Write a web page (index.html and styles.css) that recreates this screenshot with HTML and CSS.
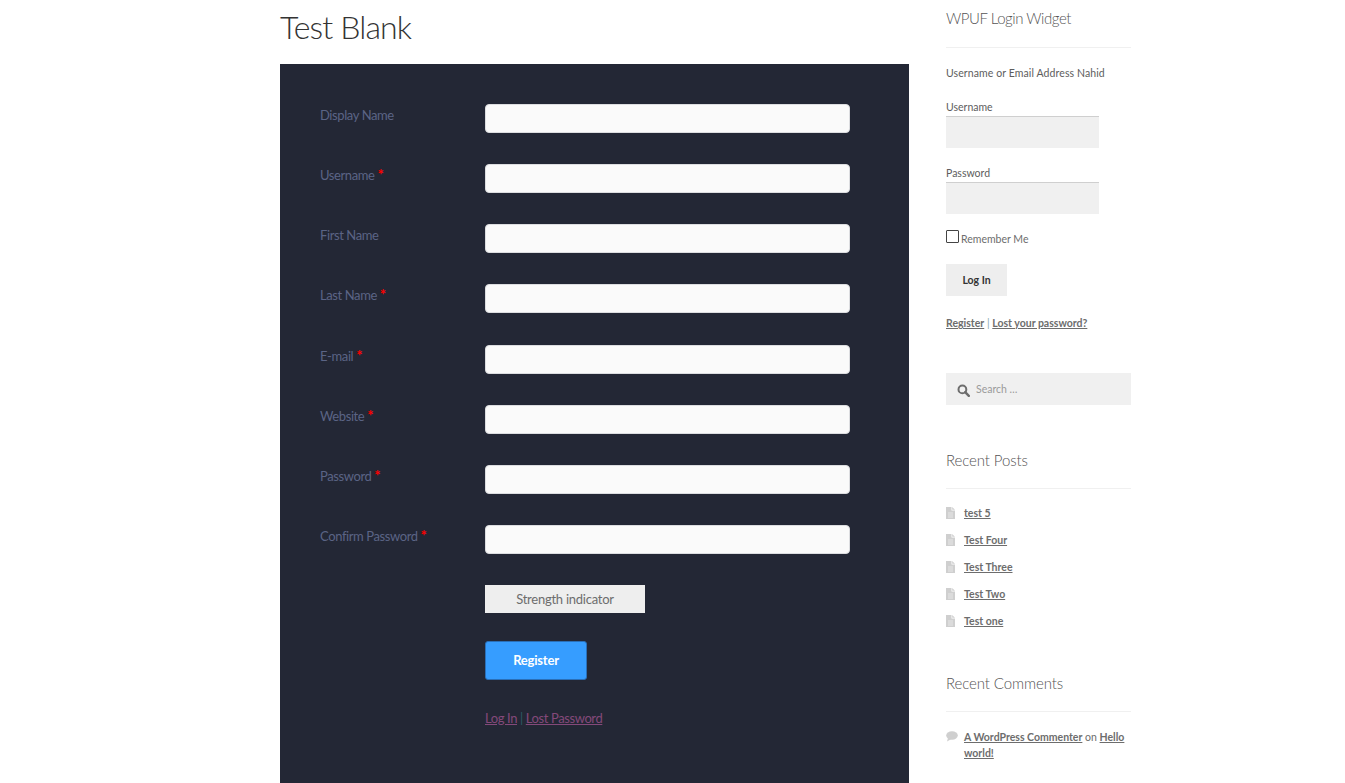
FILE: index.html
```html
<!DOCTYPE html>
<html lang="en">
<head>
<meta charset="utf-8">
<title>Test Blank</title>
<link rel="stylesheet" href="styles.css">
</head>
<body>
<div class="page">
  <main class="main">
    <h1 class="title">Test Blank</h1>
    <form class="form">
      <div class="row"><label class="label">Display Name</label><div class="input"></div></div>
      <div class="row"><label class="label">Username <span class="req">*</span></label><div class="input"></div></div>
      <div class="row"><label class="label">First Name</label><div class="input"></div></div>
      <div class="row"><label class="label">Last Name <span class="req">*</span></label><div class="input"></div></div>
      <div class="row"><label class="label">E-mail <span class="req">*</span></label><div class="input"></div></div>
      <div class="row"><label class="label">Website <span class="req">*</span></label><div class="input"></div></div>
      <div class="row"><label class="label">Password <span class="req">*</span></label><div class="input"></div></div>
      <div class="row"><label class="label">Confirm Password <span class="req">*</span></label><div class="input"></div></div>
      <div class="strength">Strength indicator</div>
      <div class="register">Register</div>
      <p class="form-links"><a href="#">Log In</a> <span class="sep">|</span> <a href="#">Lost Password</a></p>
    </form>
  </main>
  <aside class="side">
    <section class="widget login">
      <h2 class="wtitle">WPUF Login Widget</h2>
      <p class="hint">Username or Email Address Nahid</p>
      <div class="flabel">Username</div>
      <div class="finput"></div>
      <div class="flabel second">Password</div>
      <div class="finput"></div>
      <div class="remember"><span class="check"></span><span>Remember Me</span></div>
      <div class="login-btn">Log In</div>
      <p class="login-links"><a href="#">Register</a> <span class="thin">|</span> <a href="#">Lost your password?</a></p>
    </section>
    <div class="search">
      <svg class="search-icon" viewBox="0 0 13 13" width="13" height="13"><circle cx="5.4" cy="5.4" r="3.9" fill="none" stroke="#6d6d6d" stroke-width="2"/><path d="M8.2 8.2l3.6 3.6" stroke="#6d6d6d" stroke-width="2.4" stroke-linecap="round"/></svg>
      <span>Search …</span>
    </div>
    <section class="widget posts">
      <h2 class="wtitle">Recent Posts</h2>
      <ul class="list">
        <li><svg class="doc" viewBox="0 0 9 12" width="9" height="12"><path d="M0 0h5.5v3.5H9V12H0z" fill="#cfcfcf"/><path d="M6.2 0L9 2.8H6.2z" fill="#cfcfcf"/><path d="M2 6h5M2 8h5M2 10h5" stroke="#eee" stroke-width=".8"/></svg><a href="#">test 5</a></li>
        <li><svg class="doc" viewBox="0 0 9 12" width="9" height="12"><path d="M0 0h5.5v3.5H9V12H0z" fill="#cfcfcf"/><path d="M6.2 0L9 2.8H6.2z" fill="#cfcfcf"/><path d="M2 6h5M2 8h5M2 10h5" stroke="#eee" stroke-width=".8"/></svg><a href="#">Test Four</a></li>
        <li><svg class="doc" viewBox="0 0 9 12" width="9" height="12"><path d="M0 0h5.5v3.5H9V12H0z" fill="#cfcfcf"/><path d="M6.2 0L9 2.8H6.2z" fill="#cfcfcf"/><path d="M2 6h5M2 8h5M2 10h5" stroke="#eee" stroke-width=".8"/></svg><a href="#">Test Three</a></li>
        <li><svg class="doc" viewBox="0 0 9 12" width="9" height="12"><path d="M0 0h5.5v3.5H9V12H0z" fill="#cfcfcf"/><path d="M6.2 0L9 2.8H6.2z" fill="#cfcfcf"/><path d="M2 6h5M2 8h5M2 10h5" stroke="#eee" stroke-width=".8"/></svg><a href="#">Test Two</a></li>
        <li><svg class="doc" viewBox="0 0 9 12" width="9" height="12"><path d="M0 0h5.5v3.5H9V12H0z" fill="#cfcfcf"/><path d="M6.2 0L9 2.8H6.2z" fill="#cfcfcf"/><path d="M2 6h5M2 8h5M2 10h5" stroke="#eee" stroke-width=".8"/></svg><a href="#">Test one</a></li>
      </ul>
    </section>
    <section class="widget comments">
      <h2 class="wtitle">Recent Comments</h2>
      <div class="comment">
        <svg class="bubble" viewBox="0 0 12 11" width="12" height="11"><ellipse cx="6" cy="4.5" rx="5.8" ry="4.2" fill="#cfcfcf"/><path d="M2 7L1 10.5 5.5 8z" fill="#cfcfcf"/></svg>
        <p><a href="#">A WordPress Commenter</a> on <a href="#">Hello world!</a></p>
      </div>
    </section>
  </aside>
</div>
</body>
</html>
```
FILE: styles.css
```css
html, body { margin: 0; padding: 0; height: 783px; overflow: hidden; background: #fff; }
body { font-family: "Lato", "Open Sans", sans-serif; color: #6d6d6d; }
a { color: inherit; }
.page { display: flex; align-items: flex-start; padding-left: 280px; }
.main { width: 629px; flex: none; }
.title { margin: 0; height: 64px; font-size: 32px; line-height: 53px; font-weight: 300; color: #333; letter-spacing: -0.85px; }
.form { background: #232735; padding: 40px 59px 0 40px; height: 719px; box-sizing: border-box; }
.row { display: flex; height: 29px; margin-bottom: 31.14px; }
.label { width: 165px; flex: none; font-size: 13px; line-height: 23px; color: #5b6485; letter-spacing: -0.4px; }
.req { color: #f00; font-weight: 700; font-size: 15px; line-height: 0; }
.input { flex: 1; background: #fafafa; border: 1px solid #dcdde0; border-radius: 4px; box-sizing: border-box; }
.strength { margin-left: 165px; width: 160px; height: 28px; background: #eee; color: #6d6d6d; font-size: 13px; line-height: 28px; text-align: center; letter-spacing: -0.25px; }
.register { margin: 28px 0 0 165px; width: 102px; height: 39px; box-sizing: border-box; background: #369dff; border: 1px solid #2a6fb8; border-radius: 3px; color: #fff; font-size: 13px; font-weight: 700; line-height: 37px; text-align: center; letter-spacing: -0.2px; }
.form-links { margin: 28px 0 0 165px; font-size: 13px; line-height: 20px; color: #2a5a6a; letter-spacing: -0.4px; }
.form-links a { color: #84497a; }
.sep { color: #2c5a64; }
.side { width: 185px; margin-left: 37px; flex: none; font-size: 10.5px; }
.wtitle { margin: 0; font-size: 15px; font-weight: 300; color: #555; line-height: 24px; border-bottom: 1px solid #f0f0f0; letter-spacing: -0.1px; }
.login .wtitle { padding: 6px 0 17px; letter-spacing: -0.45px; }
.hint { margin: 18px 0 0; line-height: 14px; color: #5d5d5d; letter-spacing: 0.1px; }
.flabel { margin: 20px 0 2px; line-height: 14px; color: #5d5d5d; }
.flabel.second { margin-top: 18px; }
.finput { width: 153px; height: 32px; background: #f0f0f0; border-top: 1px solid #cfcfcf; box-sizing: border-box; }
.remember { display: flex; align-items: flex-end; margin-top: 16px; height: 15px; color: #6d6d6d; }
.check { width: 13px; height: 13px; border: 1px solid #444; border-radius: 1px; box-sizing: border-box; margin: 0 2px 2px 0; }
.login-btn { margin-top: 19px; width: 61px; height: 32px; background: #eee; color: #333; font-weight: 700; line-height: 32px; text-align: center; }
.login-links { margin: 20px 0 0; line-height: 14px; }
.login-links a { font-weight: 700; color: #6d6d6d; }
.thin { color: #8aa; }
.search { margin-top: 43px; height: 32px; background: #f0f0f0; display: flex; align-items: center; gap: 6px; padding-left: 11px; color: #9a9a9a; }
.search-icon { flex: none; margin-top: 2px; }
.posts { margin-top: 43px; }
.posts .wtitle, .comments .wtitle { padding-bottom: 16px; }
.list { list-style: none; margin: 10px 0 0; padding: 0; }
.list li { display: flex; align-items: center; gap: 9px; height: 27px; }
.list a { font-weight: 700; }
.comments { margin-top: 37px; }
.comment { display: flex; gap: 6px; margin-top: 17px; }
.bubble { flex: none; margin-top: 2px; }
.comment p { margin: 0; line-height: 16px; font-weight: 400; }
.comment a { font-weight: 700; }
```
